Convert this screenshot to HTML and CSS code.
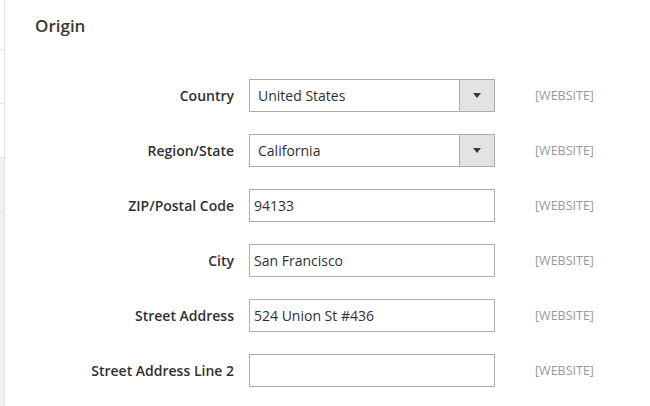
FILE: index.html
```html
<!DOCTYPE html>
<html>
<head>
<meta charset="utf-8">
<link rel="stylesheet" href="styles.css">
</head>
<body>
<div class="page">
  <nav class="side">
    <div class="side-item first"></div>
    <div class="side-item"></div>
    <div class="side-item"></div>
    <div class="side-item gray"></div>
    <div class="side-item gray rest"></div>
  </nav>
  <main class="main">
    <h2 class="title">Origin</h2>
    <div class="rows">
      <div class="row">
        <label class="label">Country</label>
        <div class="control select">
          <span class="value">United States</span>
          <span class="btn"><span class="arrow"></span></span>
        </div>
        <span class="scope">[WEBSITE]</span>
      </div>
      <div class="row">
        <label class="label">Region/State</label>
        <div class="control select">
          <span class="value">California</span>
          <span class="btn"><span class="arrow"></span></span>
        </div>
        <span class="scope">[WEBSITE]</span>
      </div>
      <div class="row">
        <label class="label">ZIP/Postal Code</label>
        <div class="control text"><span class="value">94133</span></div>
        <span class="scope">[WEBSITE]</span>
      </div>
      <div class="row">
        <label class="label">City</label>
        <div class="control text"><span class="value">San Francisco</span></div>
        <span class="scope">[WEBSITE]</span>
      </div>
      <div class="row">
        <label class="label">Street Address</label>
        <div class="control text"><span class="value">524 Union St #436</span></div>
        <span class="scope">[WEBSITE]</span>
      </div>
      <div class="row">
        <label class="label">Street Address Line 2</label>
        <div class="control text"><span class="value"></span></div>
        <span class="scope">[WEBSITE]</span>
      </div>
    </div>
  </main>
</div>
</body>
</html>
```
FILE: styles.css
```css
html, body {
  margin: 0;
  padding: 0;
  background: #fff;
  font-family: "Open Sans", "Liberation Sans", sans-serif;
}
.page {
  display: flex;
  width: 650px;
  height: 406px;
  overflow: hidden;
}
.side {
  width: 4px;
  border-right: 1px solid #e3e3e3;
  display: flex;
  flex-direction: column;
}
.side-item {
  height: 53px;
  border-bottom: 1px solid #e3e3e3;
  background: #fff;
}
.side-item.first {
  height: 49px;
}
.side-item.gray {
  background: #f1f1f1;
}
.side-item.rest {
  flex: 1;
  border-bottom: none;
}
.main {
  flex: 1;
}
.title {
  margin: 0;
  padding: 14px 0 0 30px;
  height: 31px;
  font-size: 17px;
  line-height: 24px;
  font-weight: 600;
  color: #41362f;
}
.rows {
  margin-top: 34px;
  display: flex;
  flex-direction: column;
  gap: 22px;
}
.row {
  display: flex;
  align-items: center;
  height: 33px;
}
.label {
  width: 229px;
  margin-right: 15px;
  text-align: right;
  font-size: 14px;
  font-weight: 600;
  color: #303030;
}
.control {
  width: 246px;
  height: 33px;
  box-sizing: border-box;
  border: 1px solid #adadad;
  display: flex;
  align-items: center;
  font-size: 14px;
  color: #303030;
}
.control.text .value {
  padding-left: 4px;
}
.control.select .value {
  padding-left: 8px;
  flex: 1;
}
.btn {
  width: 34px;
  height: 100%;
  background: #e3e3e3;
  border-left: 1px solid #adadad;
  display: flex;
  align-items: center;
  justify-content: center;
}
.arrow {
  width: 0;
  height: 0;
  border-left: 4px solid transparent;
  border-right: 4px solid transparent;
  border-top: 5px solid #41362f;
}
.scope {
  margin-left: 40px;
  font-size: 12.5px;
  color: #999;
}
```
